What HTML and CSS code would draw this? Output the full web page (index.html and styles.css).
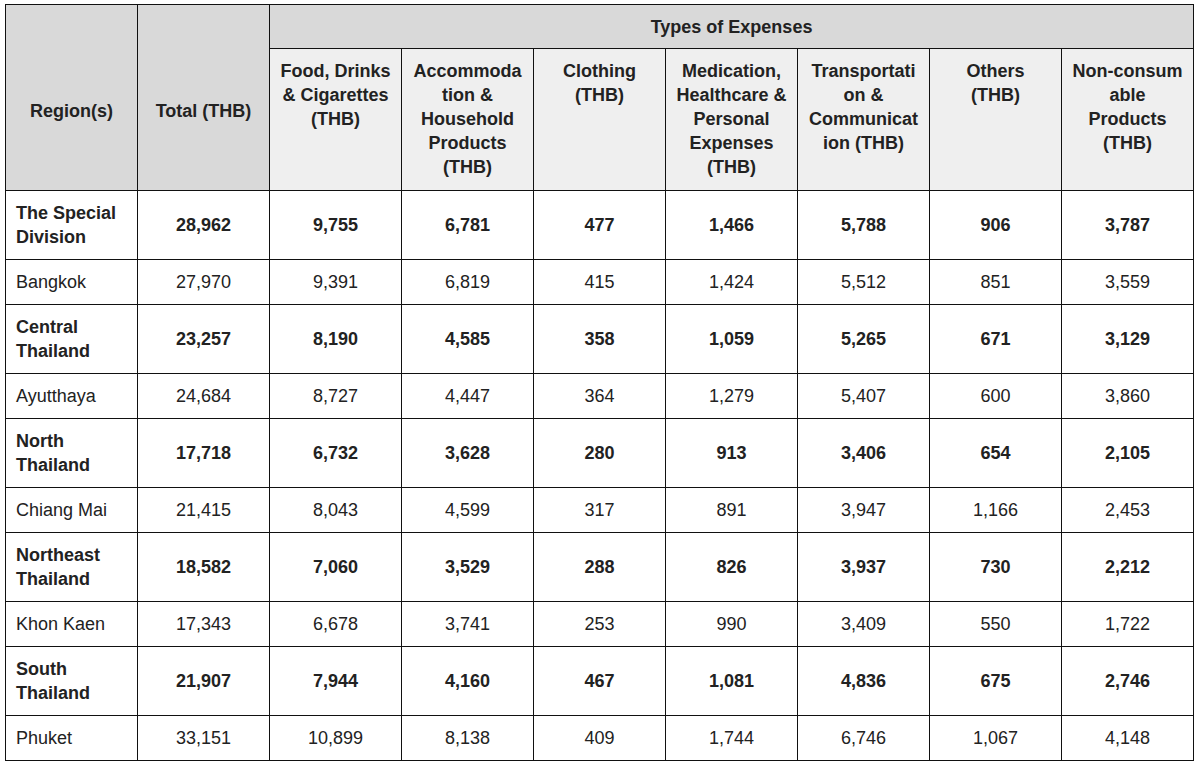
FILE: index.html
```html
<!DOCTYPE html>
<html lang="en">
<head>
<meta charset="utf-8">
<title>Household Expenses by Region</title>
<link rel="stylesheet" href="styles.css">
</head>
<body>
<table class="expenses">
  <colgroup>
    <col class="col"><col class="col"><col class="col"><col class="col"><col class="col"><col class="col"><col class="col"><col class="col"><col class="col">
  </colgroup>
  <thead>
    <tr>
      <th rowspan="2" class="head-main side">Region(s)</th>
      <th rowspan="2" class="head-main side">Total (THB)</th>
      <th colspan="7" class="head-main top">Types of Expenses</th>
    </tr>
    <tr>
      <th class="head-sub">Food, Drinks &amp; Cigarettes (THB)</th>
      <th class="head-sub">Accommodation &amp; Household Products (THB)</th>
      <th class="head-sub">Clothing (THB)</th>
      <th class="head-sub">Medication, Healthcare &amp; Personal Expenses (THB)</th>
      <th class="head-sub">Transportation &amp; Communication (THB)</th>
      <th class="head-sub">Others (THB)</th>
      <th class="head-sub">Non&#8209;consumable Products (THB)</th>
    </tr>
  </thead>
  <tbody>
    <tr class="region">
      <td class="name">The Special Division</td><td>28,962</td><td>9,755</td><td>6,781</td><td>477</td><td>1,466</td><td>5,788</td><td>906</td><td>3,787</td>
    </tr>
    <tr>
      <td class="name">Bangkok</td><td>27,970</td><td>9,391</td><td>6,819</td><td>415</td><td>1,424</td><td>5,512</td><td>851</td><td>3,559</td>
    </tr>
    <tr class="region">
      <td class="name">Central Thailand</td><td>23,257</td><td>8,190</td><td>4,585</td><td>358</td><td>1,059</td><td>5,265</td><td>671</td><td>3,129</td>
    </tr>
    <tr>
      <td class="name">Ayutthaya</td><td>24,684</td><td>8,727</td><td>4,447</td><td>364</td><td>1,279</td><td>5,407</td><td>600</td><td>3,860</td>
    </tr>
    <tr class="region">
      <td class="name">North Thailand</td><td>17,718</td><td>6,732</td><td>3,628</td><td>280</td><td>913</td><td>3,406</td><td>654</td><td>2,105</td>
    </tr>
    <tr>
      <td class="name">Chiang Mai</td><td>21,415</td><td>8,043</td><td>4,599</td><td>317</td><td>891</td><td>3,947</td><td>1,166</td><td>2,453</td>
    </tr>
    <tr class="region">
      <td class="name">Northeast Thailand</td><td>18,582</td><td>7,060</td><td>3,529</td><td>288</td><td>826</td><td>3,937</td><td>730</td><td>2,212</td>
    </tr>
    <tr>
      <td class="name">Khon Kaen</td><td>17,343</td><td>6,678</td><td>3,741</td><td>253</td><td>990</td><td>3,409</td><td>550</td><td>1,722</td>
    </tr>
    <tr class="region">
      <td class="name">South Thailand</td><td>21,907</td><td>7,944</td><td>4,160</td><td>467</td><td>1,081</td><td>4,836</td><td>675</td><td>2,746</td>
    </tr>
    <tr>
      <td class="name">Phuket</td><td>33,151</td><td>10,899</td><td>8,138</td><td>409</td><td>1,744</td><td>6,746</td><td>1,067</td><td>4,148</td>
    </tr>
  </tbody>
</table>
</body>
</html>
```

FILE: styles.css
```css
html, body {
  margin: 0;
  padding: 0;
  background: #ffffff;
}

body {
  font-family: "Liberation Sans", Arial, sans-serif;
  font-size: 18px;
  line-height: 24px;
  color: #222222;
}

.expenses {
  margin: 4px 0 0 5px;
  width: 1189px;
  table-layout: fixed;
  border-collapse: collapse;
}

.col {
  width: 132px;
}

.expenses th,
.expenses td {
  border: 1px solid #111111;
  padding: 10px 10px;
  text-align: center;
  vertical-align: middle;
  overflow-wrap: anywhere;
}

.head-main {
  background: #d9d9d9;
  font-weight: bold;
}

.expenses .head-main.top {
  padding-bottom: 9px;
}

.expenses .head-main.side {
  padding-top: 36px;
  padding-bottom: 10px;
}

.expenses .head-sub {
  background: #efefef;
  font-weight: bold;
  vertical-align: top;
  padding-bottom: 11px;
}

.region td {
  font-weight: bold;
}

.expenses td.name {
  text-align: left;
}
```
